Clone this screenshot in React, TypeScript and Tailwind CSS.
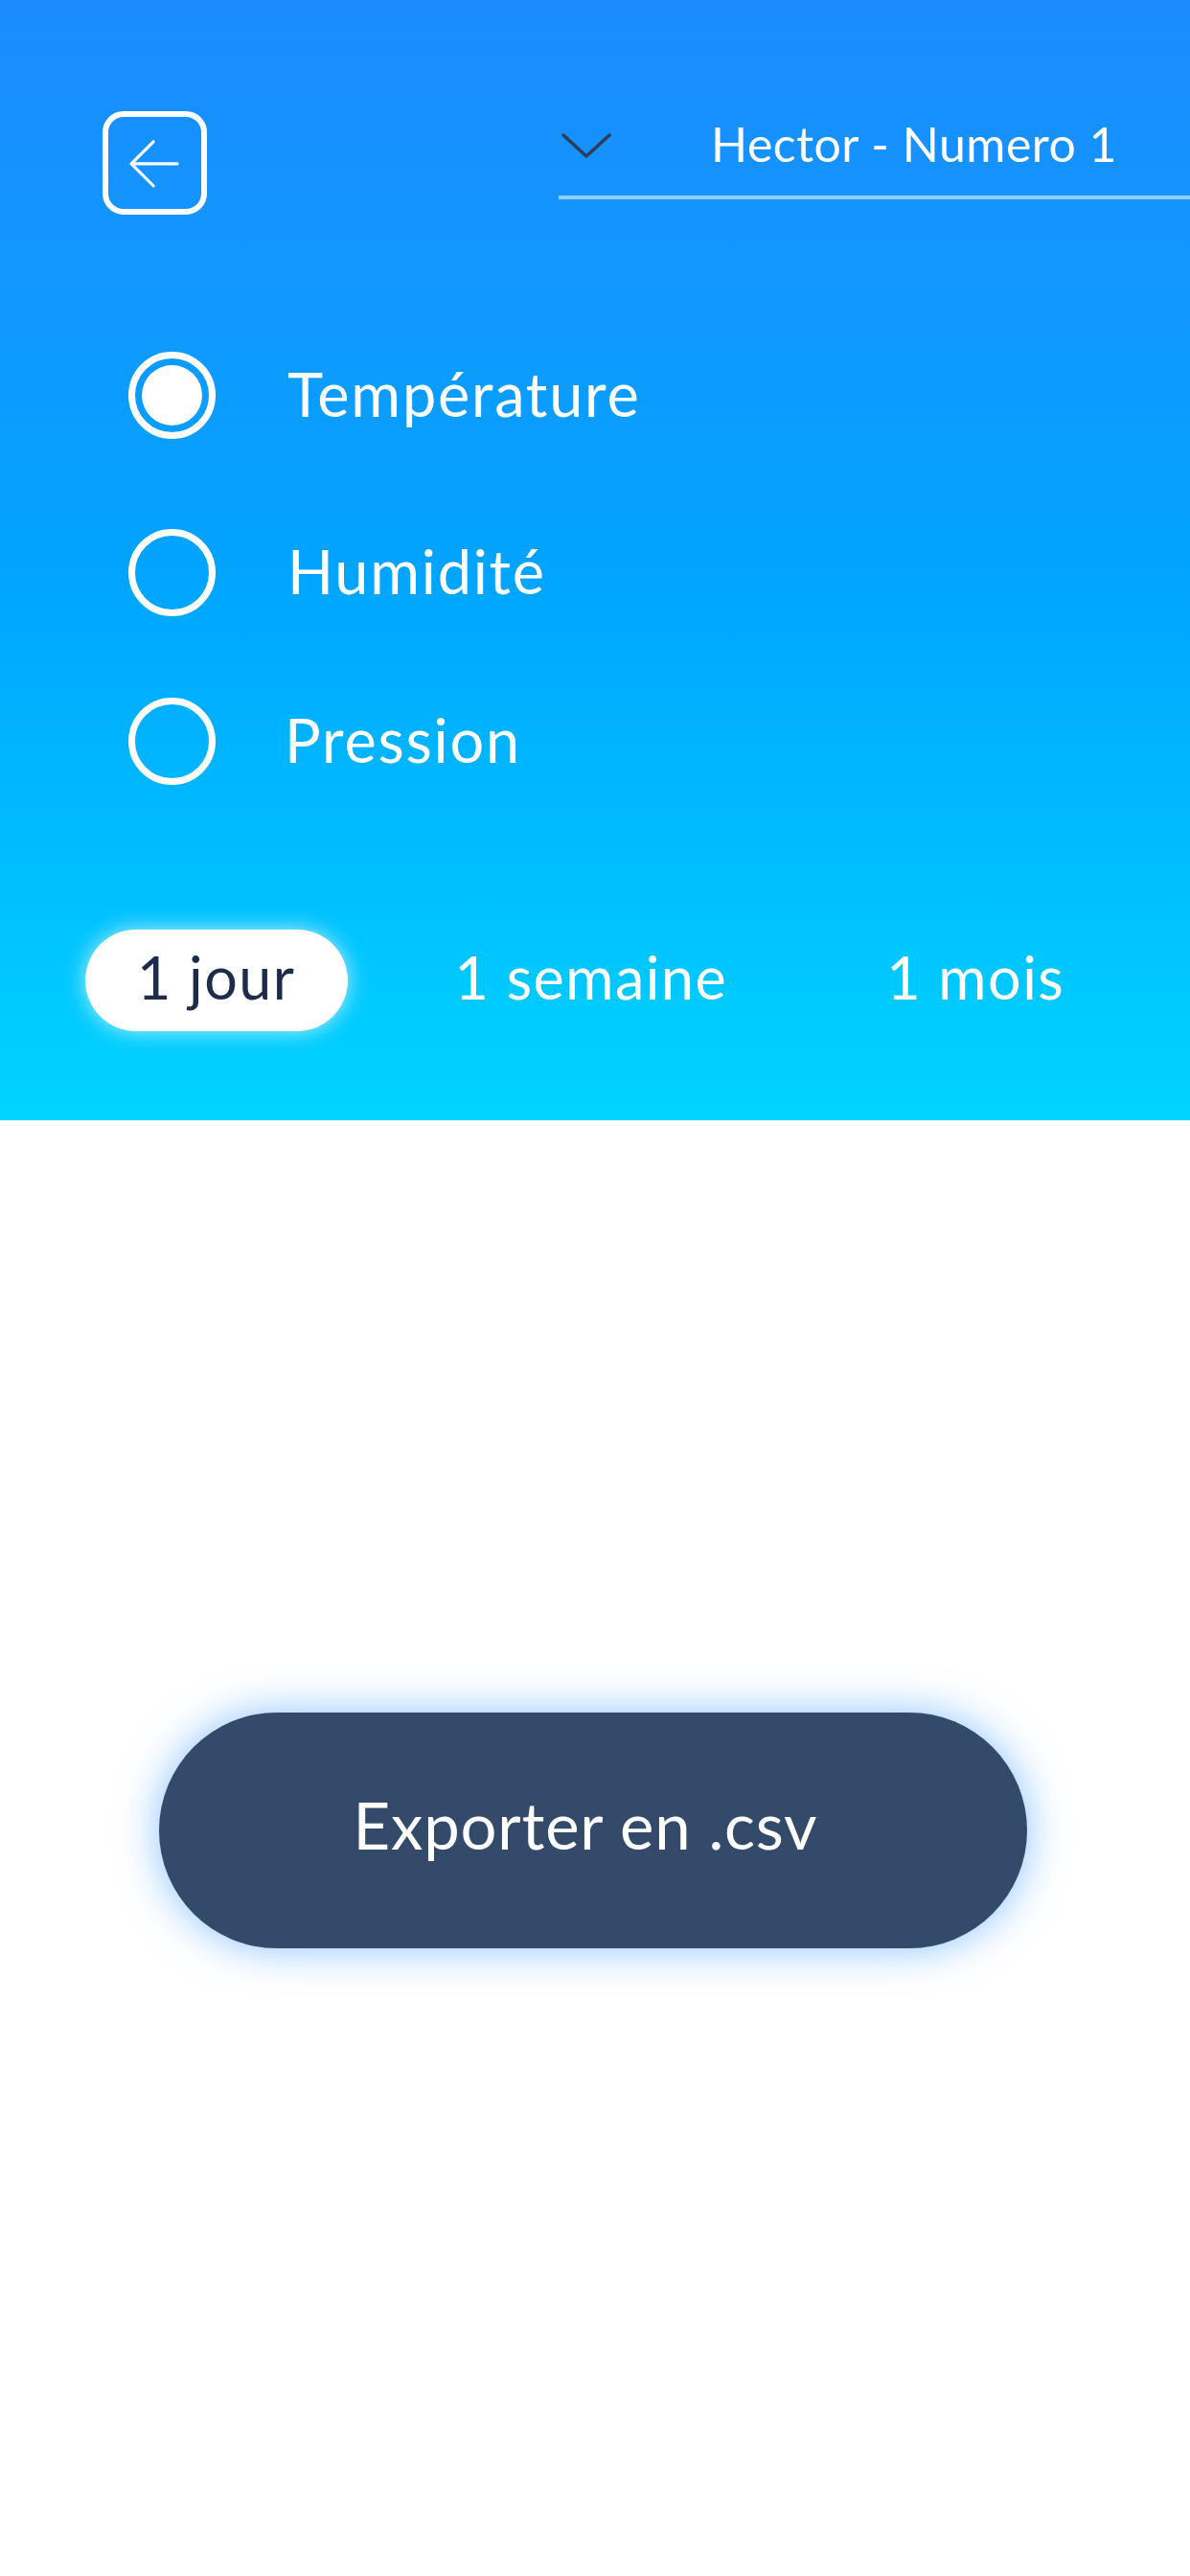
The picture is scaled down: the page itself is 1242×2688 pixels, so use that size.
import { useState } from "react";

const metrics = ["Température", "Humidité", "Pression"];
const periods = ["1 jour", "1 semaine", "1 mois"];

const BackIcon = () => (
  <svg viewBox="0 0 109 108" className="w-full h-full" fill="none">
    <path
      d="M81 55H28M53 29L27 55l26 26"
      stroke="white"
      strokeWidth="3.5"
      strokeLinecap="round"
      strokeLinejoin="round"
    />
  </svg>
);

const Chevron = () => (
  <svg viewBox="0 0 52 26" className="w-[52px] h-[26px]" fill="none">
    <path d="M2 2l24 22L50 2" stroke="#2c3e57" strokeWidth="3.5" strokeLinecap="round" strokeLinejoin="round" />
  </svg>
);

export default function App() {
  const [metric, setMetric] = useState(0);
  const [period, setPeriod] = useState(0);

  return (
    <div className="min-h-[2688px] w-[1242px] bg-white font-['Lato','Noto_Sans',sans-serif]">
      <div className="h-[1169px] flex flex-col bg-gradient-to-b from-[#1b8bff] via-[#02a3ff] to-[#00d4ff]">
        {/* top bar */}
        <div className="flex items-start">
          <button className="ml-[107px] mt-[116px] w-[109px] h-[108px] rounded-[22px] border-[6px] border-white p-0">
            <BackIcon />
          </button>
          <div className="ml-auto mt-[106px] w-[659px] h-[102px] flex items-center border-b-[4px] border-white/55">
            <div className="ml-[3px] -mt-[6px]">
              <Chevron />
            </div>
            <span className="ml-[104px] -mt-[10px] text-[50px] leading-none tracking-[0.01em] text-white">
              Hector - Numero 1
            </span>
          </div>
        </div>

        {/* metric radios */}
        <div className="flex flex-col pl-[134px] mt-[143px]">
          {metrics.map((m, i) => (
            <button
              key={m}
              onClick={() => setMetric(i)}
              className={`flex items-center text-left ${i === 1 ? "mt-[94px]" : i === 2 ? "mt-[85px]" : ""}`}
            >
              <span className="w-[91px] h-[91px] rounded-full border-[7px] border-white flex items-center justify-center shrink-0">
                {metric === i && <span className="w-[63px] h-[63px] rounded-full bg-white" />}
              </span>
              <span
                className={`${i === 2 ? "ml-[72px]" : "ml-[75px]"} -mt-[5px] text-[63px] leading-none tracking-[0.028em] text-white`}
              >
                {m}
              </span>
            </button>
          ))}
        </div>

        {/* period pills */}
        <div className="mt-auto mb-[93px] flex items-center gap-[58px] pl-[89px]">
          {periods.map((p, i) => (
            <button
              key={p}
              onClick={() => setPeriod(i)}
              className={`h-[106px] px-[54px] rounded-full text-[61px] leading-none tracking-[0.025em] ${
                period === i
                  ? "bg-white text-[#1e2c4c] shadow-[0_0_22px_rgba(255,255,255,0.7)]"
                  : "text-white"
              }`}
            >
              <span className="relative -top-[4px]">{p}</span>
            </button>
          ))}
        </div>
      </div>

      <div className="pt-[618px] flex justify-center">
        <button className="ml-[-4px] w-[906px] h-[246px] rounded-full bg-[#334a6b] text-white text-[67px] leading-none tracking-[0.012em] shadow-[0_0_44px_rgba(90,170,255,0.7)]">
          <span className="relative -top-[6px] left-[-8px]">Exporter en .csv</span>
        </button>
      </div>
    </div>
  );
}
